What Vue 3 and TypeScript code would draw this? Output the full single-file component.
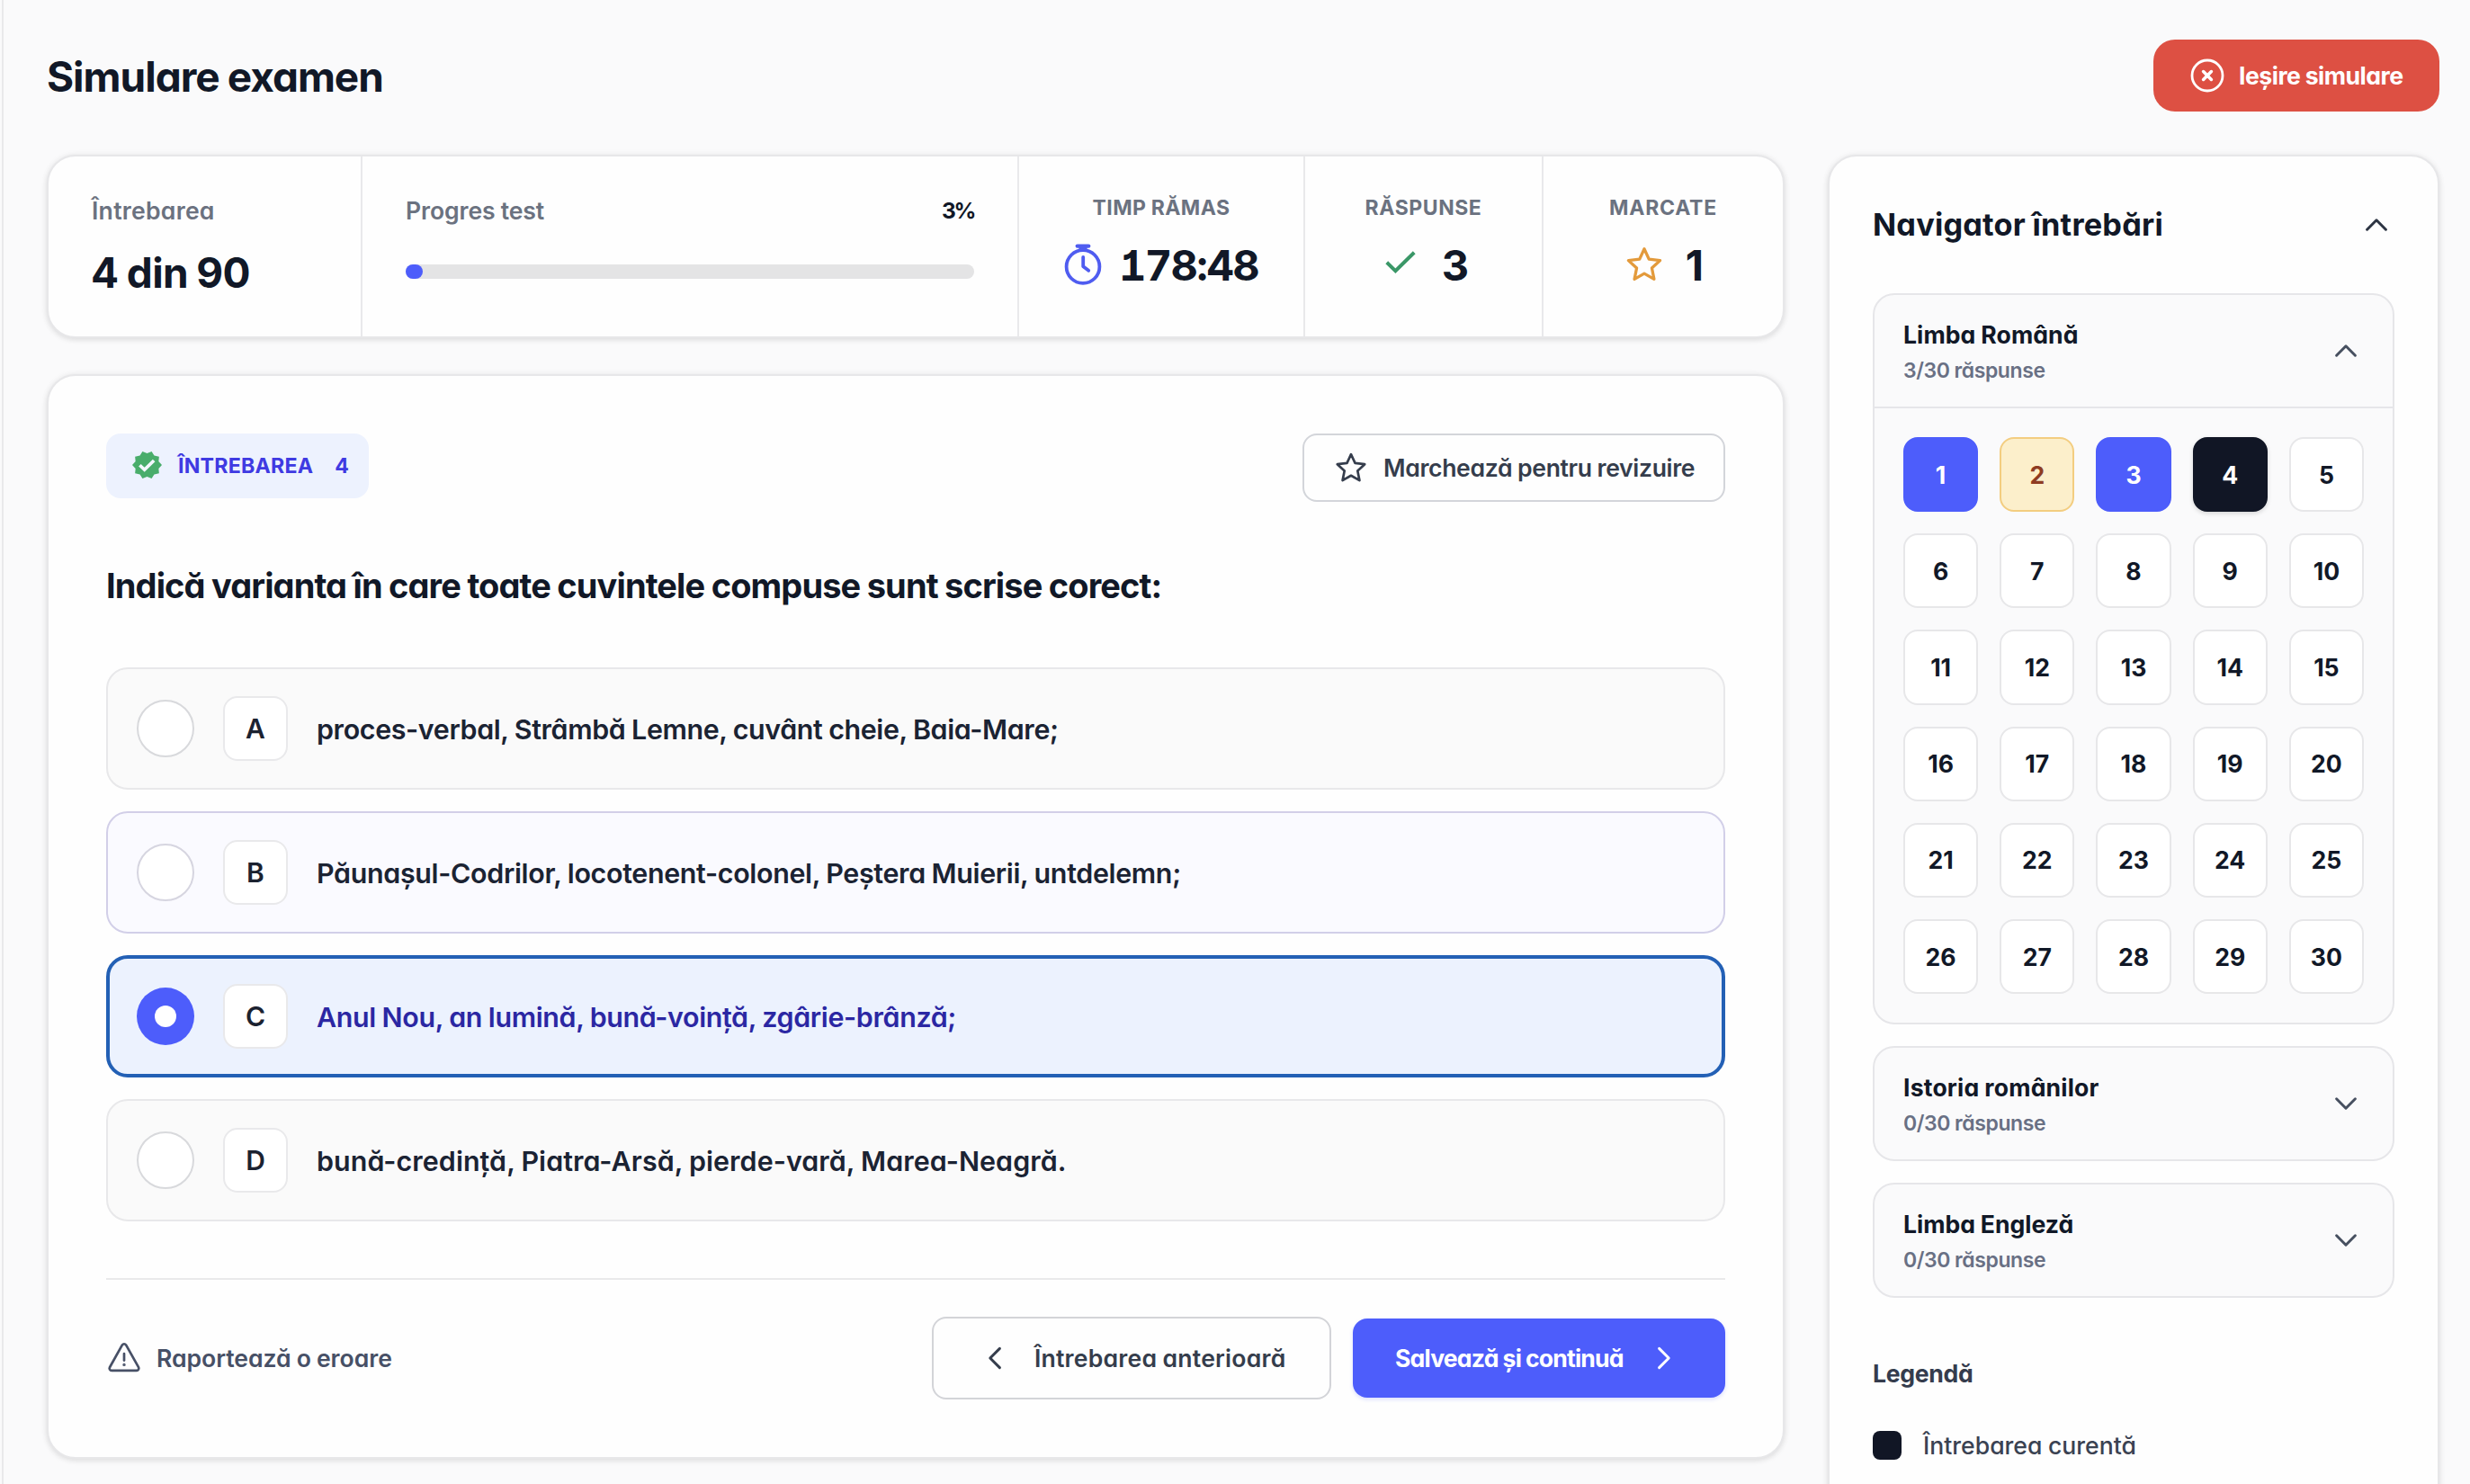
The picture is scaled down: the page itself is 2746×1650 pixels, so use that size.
<script setup lang="ts">
interface Option { letter: string; text: string; state: '' | 'hover' | 'selected'; tracking: number }
interface Section { name: string; answered: number; total: number; open: boolean; tracking: number }

const answer: Option[] = [
  { letter: 'A', text: 'proces-verbal, Strâmbă Lemne, cuvânt cheie, Baia-Mare;', state: '', tracking: -0.36 },
  { letter: 'B', text: 'Păunașul-Codrilor, locotenent-colonel, Peștera Muierii, untdelemn;', state: 'hover', tracking: -0.32 },
  { letter: 'C', text: 'Anul Nou, an lumină, bună-voință, zgârie-brânză;', state: 'selected', tracking: -0.34 },
  { letter: 'D', text: 'bună-credință, Piatra-Arsă, pierde-vară, Marea-Neagră.', state: '', tracking: 0.08 }
]

const sections: Section[] = [
  { name: 'Limba Română', answered: 3, total: 30, open: true, tracking: 0.08 },
  { name: 'Istoria românilor', answered: 0, total: 30, open: false, tracking: 0.18 },
  { name: 'Limba Engleză', answered: 0, total: 30, open: false, tracking: 0 }
]

const cellState: Record<number, string> = { 1: 'answered', 2: 'marked', 3: 'answered', 4: 'current' }
const progress = 3
const starPath = 'M12 2.6l2.85 6.2 6.75.8-5 4.6 1.35 6.7L12 17.55 6.05 20.9l1.35-6.7-5-4.6 6.75-.8z'
</script>

<template>
  <div class="shell">
    <main class="page">
      <header class="top">
        <h1 class="title">Simulare examen</h1>
        <button class="exit">
          <svg width="38" height="38" viewBox="0 0 38 38" fill="none" stroke="currentColor" stroke-linecap="round">
            <circle cx="19" cy="19" r="17" stroke-width="2.8" />
            <path d="M14.6 14.6l8.8 8.8M23.4 14.6l-8.8 8.8" stroke-width="3.6" />
          </svg>
          <span>Ieșire simulare</span>
        </button>
      </header>

      <div class="columns">
        <div class="left">
          <section class="card stats">
            <div class="stat first">
              <span class="label">Întrebarea</span>
              <span class="value">4 din 90</span>
            </div>
            <div class="stat progress">
              <div class="progress-head">
                <span class="label test">Progres test</span>
                <span class="percent">{{ progress }}%</span>
              </div>
              <div class="track"><div class="fill" :style="{ width: progress + '%' }"></div></div>
            </div>
            <div class="stat small time">
              <span class="caps">TIMP RĂMAS</span>
              <div class="figure">
                <svg class="clock" width="42" height="46" viewBox="0 0 42 46" fill="none" stroke="currentColor" stroke-linecap="round">
                  <path d="M14.8 2.6h12.4" stroke-width="4.4" />
                  <path d="M21 2v6" stroke-width="9" stroke-linecap="butt" />
                  <circle cx="21" cy="25.5" r="18.4" stroke-width="3.8" />
                  <path d="M21.2 15v10.2l6 4.6" stroke-width="3.8" stroke-linejoin="round" />
                </svg>
                <span class="num timer">178:48</span>
              </div>
            </div>
            <div class="stat small done">
              <span class="caps wide">RĂSPUNSE</span>
              <div class="figure">
                <svg class="check" width="34" height="26" viewBox="0 0 34 26" fill="none" stroke="currentColor" stroke-width="4" stroke-linecap="square">
                  <path d="M3.2 14.2l8.2 8L30.8 3.2" />
                </svg>
                <span class="num">3</span>
              </div>
            </div>
            <div class="stat small flagged">
              <span class="caps wider">MARCATE</span>
              <div class="figure">
                <svg class="star-orange" width="44" height="44" viewBox="0 0 24 24" fill="none" stroke="currentColor" stroke-width="1.8" stroke-linejoin="round"><path :d="starPath" /></svg>
                <span class="num">1</span>
              </div>
            </div>
          </section>

          <section class="card question">
            <div class="question-head">
              <div class="badge">
                <svg width="33" height="30" viewBox="1 1.5 22 21" preserveAspectRatio="none">
                  <path fill="#49ad6b" d="M23 12l-2.44-2.79.34-3.69-3.61-.82-1.89-3.2L12 2.96 8.6 1.5 6.71 4.69 3.1 5.5l.34 3.7L1 12l2.44 2.79-.34 3.7 3.61.82L8.6 22.5l3.4-1.47 3.4 1.46 1.89-3.19 3.61-.82-.34-3.69z" />
                  <path fill="none" stroke="#f4f8ff" stroke-width="2.4" d="M6.6 12.2l3.5 3.5 7-7.2" />
                </svg>
                <span class="badge-text">ÎNTREBAREA</span>
                <span class="badge-num">4</span>
              </div>
              <button class="mark">
                <svg width="38" height="38" viewBox="0 0 24 24" fill="none" stroke="currentColor" stroke-width="1.7" stroke-linejoin="round"><path :d="starPath" /></svg>
                <span>Marchează pentru revizuire</span>
              </button>
            </div>

            <h2 class="prompt">Indică varianta în care toate cuvintele compuse sunt scrise corect:</h2>

            <div class="options">
              <div v-for="o in answer" :key="o.letter" class="option" :class="o.state">
                <span class="radio"><span v-if="o.state === 'selected'" class="dot"></span></span>
                <span class="letter">{{ o.letter }}</span>
                <span class="option-text" :style="{ letterSpacing: o.tracking + 'px' }">{{ o.text }}</span>
              </div>
            </div>

            <footer class="actions">
              <a class="report">
                <svg width="38" height="34" viewBox="0 0 38 34" fill="none" stroke="currentColor" stroke-linecap="round" stroke-linejoin="round">
                  <path d="M16.9 3.4a2.5 2.5 0 0 1 4.2 0L35 28.2a2.4 2.4 0 0 1-2.1 3.6H5.1A2.4 2.4 0 0 1 3 28.2z" stroke-width="2.7" />
                  <path d="M19 13v7.6" stroke-width="2.7" />
                  <circle cx="19" cy="25.4" r=".7" stroke-width="2" />
                </svg>
                <span>Raportează o eroare</span>
              </a>
              <div class="nav-buttons">
                <button class="prev">
                  <svg width="16" height="26" viewBox="0 0 16 26" fill="none" stroke="currentColor" stroke-width="3" stroke-linecap="round" stroke-linejoin="round"><path d="M13.4 2.4L2.8 13l10.6 10.6" /></svg>
                  <span>Întrebarea anterioară</span>
                </button>
                <button class="next">
                  <span>Salvează și continuă</span>
                  <svg width="16" height="26" viewBox="0 0 16 26" fill="none" stroke="currentColor" stroke-width="3" stroke-linecap="round" stroke-linejoin="round"><path d="M2.6 2.4L13.2 13 2.6 23.6" /></svg>
                </button>
              </div>
            </footer>
          </section>
        </div>

        <aside class="card navigator">
          <div class="nav-head">
            <h3 class="nav-title">Navigator întrebări</h3>
            <svg class="chevron dark" width="40" height="40" viewBox="0 0 40 40"><path d="M9.6 25.2L20 14.8l10.4 10.4" /></svg>
          </div>

          <div class="sections">
            <div v-for="s in sections" :key="s.name" class="section">
              <div class="section-head">
                <div class="section-names">
                  <span class="section-name" :style="{ letterSpacing: s.tracking + 'px' }">{{ s.name }}</span>
                  <span class="section-count">{{ s.answered }}/{{ s.total }} răspunse</span>
                </div>
                <svg class="chevron" width="40" height="40" viewBox="0 0 40 40">
                  <path :d="s.open ? 'M9.6 25.2L20 14.8l10.4 10.4' : 'M9.6 14.8L20 25.2l10.4-10.4'" />
                </svg>
              </div>
              <div v-if="s.open" class="grid">
                <span v-for="n in s.total" :key="n" class="cell" :class="cellState[n]">{{ n }}</span>
              </div>
            </div>
          </div>

          <h4 class="legend-title">Legendă</h4>
          <div class="legend-row">
            <span class="swatch"></span>
            <span>Întrebarea curentă</span>
          </div>
        </aside>
      </div>
    </main>
  </div>
</template>

<style>
body { margin: 0; background: #fafafb; }
</style>

<style scoped>
.shell {
  width: 2746px;
  height: 1650px;
  overflow: hidden;
  box-sizing: border-box;
  padding-left: 2px;
  background: #fafafb;
  font-family: Inter, "Open Sans", sans-serif;
  font-feature-settings: "cv11";
  color: #111827;
}
.shell * { box-sizing: border-box; }
button { font: inherit; font-feature-settings: inherit; }
h1, h2, h3, h4 { margin: 0; font-weight: 700; }
span, h1, h2, h3, h4 { word-spacing: -0.02em; }
.page {
  height: 1750px;
  border-left: 2px solid #e9e9eb;
  padding: 44px 34px 0 48px;
}
.top { display: flex; justify-content: space-between; height: 80px; margin-bottom: 48px; }
.title { font-size: 46px; line-height: 60px; letter-spacing: -1px; padding-top: 11px; }
.exit {
  width: 318px;
  height: 80px;
  border: 0;
  border-radius: 24px;
  background: #dd5043;
  color: #fff;
  display: flex;
  align-items: center;
  padding: 0 0 0 41px;
  gap: 16px;
  font-size: 26.6px;
  font-weight: 700;
  letter-spacing: -0.5px;
  white-space: nowrap;
}
.columns { display: flex; gap: 48px; align-items: flex-start; }
.left { width: 1932px; display: flex; flex-direction: column; gap: 40px; }
.card {
  border: 2px solid #e7e7e9;
  border-radius: 32px;
  background: #fefefe;
  box-shadow: 0 2px 6px rgba(0, 0, 0, 0.1), 0 0 8px rgba(0, 0, 0, 0.04);
}

.stats { display: flex; height: 204px; }
.stat { border-right: 2px solid #e9e9eb; display: flex; flex-direction: column; }
.first { width: 349px; padding: 44px 0 0 48px; }
.label { font-size: 26.6px; line-height: 32px; font-weight: 600; color: #6b7280; letter-spacing: 0.25px; }
.label.test { letter-spacing: -0.1px; }
.value { font-size: 46px; line-height: 60px; font-weight: 700; letter-spacing: -0.65px; margin-top: 23px; margin-left: -1px; }
.progress { width: 730px; padding: 44px 48px 0; }
.progress-head { display: flex; justify-content: space-between; }
.percent { font-size: 24.5px; line-height: 32px; font-weight: 700; letter-spacing: -2.4px; padding-right: 0; }
.track { margin-top: 44px; height: 16px; border-radius: 8px; background: #e4e4e5; }
.fill { height: 16px; border-radius: 8px; background: #4d5dfb; }
.small { align-items: center; padding-top: 41px; }
.time { width: 318px; }
.done { width: 265px; }
.flagged { flex: 1; border-right: 0; }
.caps { font-size: 23px; line-height: 32px; font-weight: 700; color: #6b7280; letter-spacing: 0.42px; }
.caps.wide { letter-spacing: 0.56px; }
.caps.wider { letter-spacing: 0.76px; }
.figure { display: flex; align-items: center; height: 60px; margin-top: 18px; }
.num { font-size: 47px; line-height: 60px; font-weight: 700; }
.timer { font-feature-settings: "cv11", "tnum", "cv01"; letter-spacing: -1.6px; margin-left: -1px; }
.clock { color: #4f5cf0; margin-right: 20px; margin-bottom: 3px; }
.check { color: #3a9767; margin: 0 29px 6px 8px; }
.star-orange { color: #e39a3b; margin: 0 24px 3px 2px; }

.question { height: 1206px; padding: 64px; }
.question-head { display: flex; justify-content: space-between; align-items: flex-start; height: 76px; }
.badge {
  width: 292px;
  height: 72px;
  border-radius: 16px;
  background: #edf2fe;
  display: flex;
  align-items: center;
  padding-left: 29px;
  color: #3f3ae2;
  font-size: 23.2px;
  font-weight: 700;
  line-height: 32px;
}
.badge svg { margin-bottom: 2px; }
.badge-text { margin-left: 18px; letter-spacing: 0.2px; }
.badge-num { margin-left: 24px; }
.mark {
  width: 470px;
  height: 76px;
  border: 2px solid #d3d5da;
  border-radius: 16px;
  background: #fefefe;
  display: flex;
  align-items: center;
  padding: 0 0 0 33px;
  gap: 17px;
  color: #353d4c;
  font-size: 26.6px;
  font-weight: 600;
  letter-spacing: -0.35px;
  white-space: nowrap;
}
.prompt { margin-top: 65px; font-size: 38px; line-height: 56px; letter-spacing: -0.88px; white-space: nowrap; }
.options { margin-top: 63px; display: flex; flex-direction: column; gap: 24px; }
.option {
  height: 136px;
  border: 2px solid #e8e8ea;
  border-radius: 24px;
  background: #fafafa;
  display: flex;
  align-items: center;
  padding-left: 32px;
}
.option.hover { background: #fafaff; border-color: #d2cfe8; }
.option.selected { background: #ecf2fe; border: 4px solid #2360b5; padding-left: 30px; }
.radio {
  width: 64px;
  height: 64px;
  border-radius: 50%;
  border: 2px solid #d8d9dc;
  background: #fff;
  display: flex;
  align-items: center;
  justify-content: center;
}
.hover .radio { border-color: #d6d5e0; }
.selected .radio { background: #4d5dfb; border: 0; }
.dot { width: 24px; height: 24px; border-radius: 50%; background: #fff; }
.letter {
  width: 72px;
  height: 72px;
  margin-left: 32px;
  border: 2px solid #e9e9eb;
  border-radius: 16px;
  background: #fff;
  display: flex;
  align-items: center;
  justify-content: center;
  font-size: 30px;
  font-weight: 600;
  color: #1b2230;
}
.option-text { margin-left: 32px; font-size: 30.4px; line-height: 44px; padding-top: 2px; font-weight: 600; white-space: nowrap; color: #1b2333; }
.selected .option-text { color: #2b27a3; }

.actions {
  margin-top: 63px;
  border-top: 2px solid #e9e9eb;
  padding-top: 41px;
  display: flex;
  justify-content: space-between;
  align-items: center;
}
.report { display: flex; align-items: center; gap: 17px; margin-left: 1px; color: #475066; font-size: 26.6px; font-weight: 600; letter-spacing: -0.05px; }
.report svg { margin-bottom: 2px; }
.nav-buttons { display: flex; align-items: center; gap: 24px; }
.prev, .next { display: flex; align-items: center; border-radius: 16px; font-size: 26.6px; white-space: nowrap; }
.prev {
  width: 444px;
  height: 92px;
  border: 2px solid #d3d4d8;
  background: #fefefe;
  padding: 0 0 0 60px;
  gap: 36px;
  color: #353d4c;
  font-weight: 600;
  letter-spacing: 0.2px;
}
.next {
  width: 414px;
  height: 88px;
  border: 0;
  background: #4d5dfb;
  color: #fff;
  padding: 0 0 0 47px;
  gap: 37px;
  font-weight: 700;
  letter-spacing: -0.82px;
  box-shadow: 0 2px 4px rgba(77, 93, 251, 0.2);
}

.navigator { width: 680px; height: 1600px; padding: 52px 48px 0; }
.nav-head { display: flex; justify-content: space-between; align-items: center; height: 48px; }
.nav-title { font-size: 34.3px; line-height: 48px; letter-spacing: 0.2px; white-space: nowrap; }
.chevron { fill: none; stroke: #475060; stroke-width: 3; stroke-linecap: round; stroke-linejoin: round; }
.chevron.dark { stroke: #2d3543; }
.sections { margin-top: 52px; display: flex; flex-direction: column; gap: 24px; }
.section { border: 2px solid #e6e6e9; border-radius: 24px; background: #fafafb; }
.section-head { height: 124px; padding: 0 32px; display: flex; justify-content: space-between; align-items: center; }
.section-names { display: flex; flex-direction: column; padding-top: 4px; }
.section-name { font-size: 26.6px; line-height: 40px; font-weight: 700; }
.section-count { font-size: 23px; line-height: 41px; font-weight: 600; color: #697084; letter-spacing: -0.4px; }
.grid {
  border-top: 2px solid #e6e6e9;
  padding: 32px;
  display: grid;
  grid-template-columns: repeat(5, 1fr);
  gap: 24px;
}
.cell {
  height: 83.2px;
  border: 2px solid #e7e7e9;
  border-radius: 16px;
  background: #fff;
  display: flex;
  align-items: center;
  justify-content: center;
  font-size: 26.6px;
  font-weight: 700;
}
.cell.answered { background: #4d5dfb; border-color: #4d5dfb; color: #fff; }
.cell.marked { background: #fcefcb; border-color: #f3cd80; color: #8f3c22; }
.cell.current { background: #111625; border-color: #111625; color: #fff; box-shadow: 0 2px 5px rgba(0, 0, 0, 0.15); }
.legend-title { margin-top: 64px; font-size: 26.6px; line-height: 40px; letter-spacing: -0.3px; color: #353c4d; }
.legend-row { margin-top: 40px; height: 40px; display: flex; align-items: center; gap: 24px; font-size: 26.6px; font-weight: 500; color: #3a4252; }
.swatch { width: 32px; height: 32px; border-radius: 8px; background: #111625; }
</style>
